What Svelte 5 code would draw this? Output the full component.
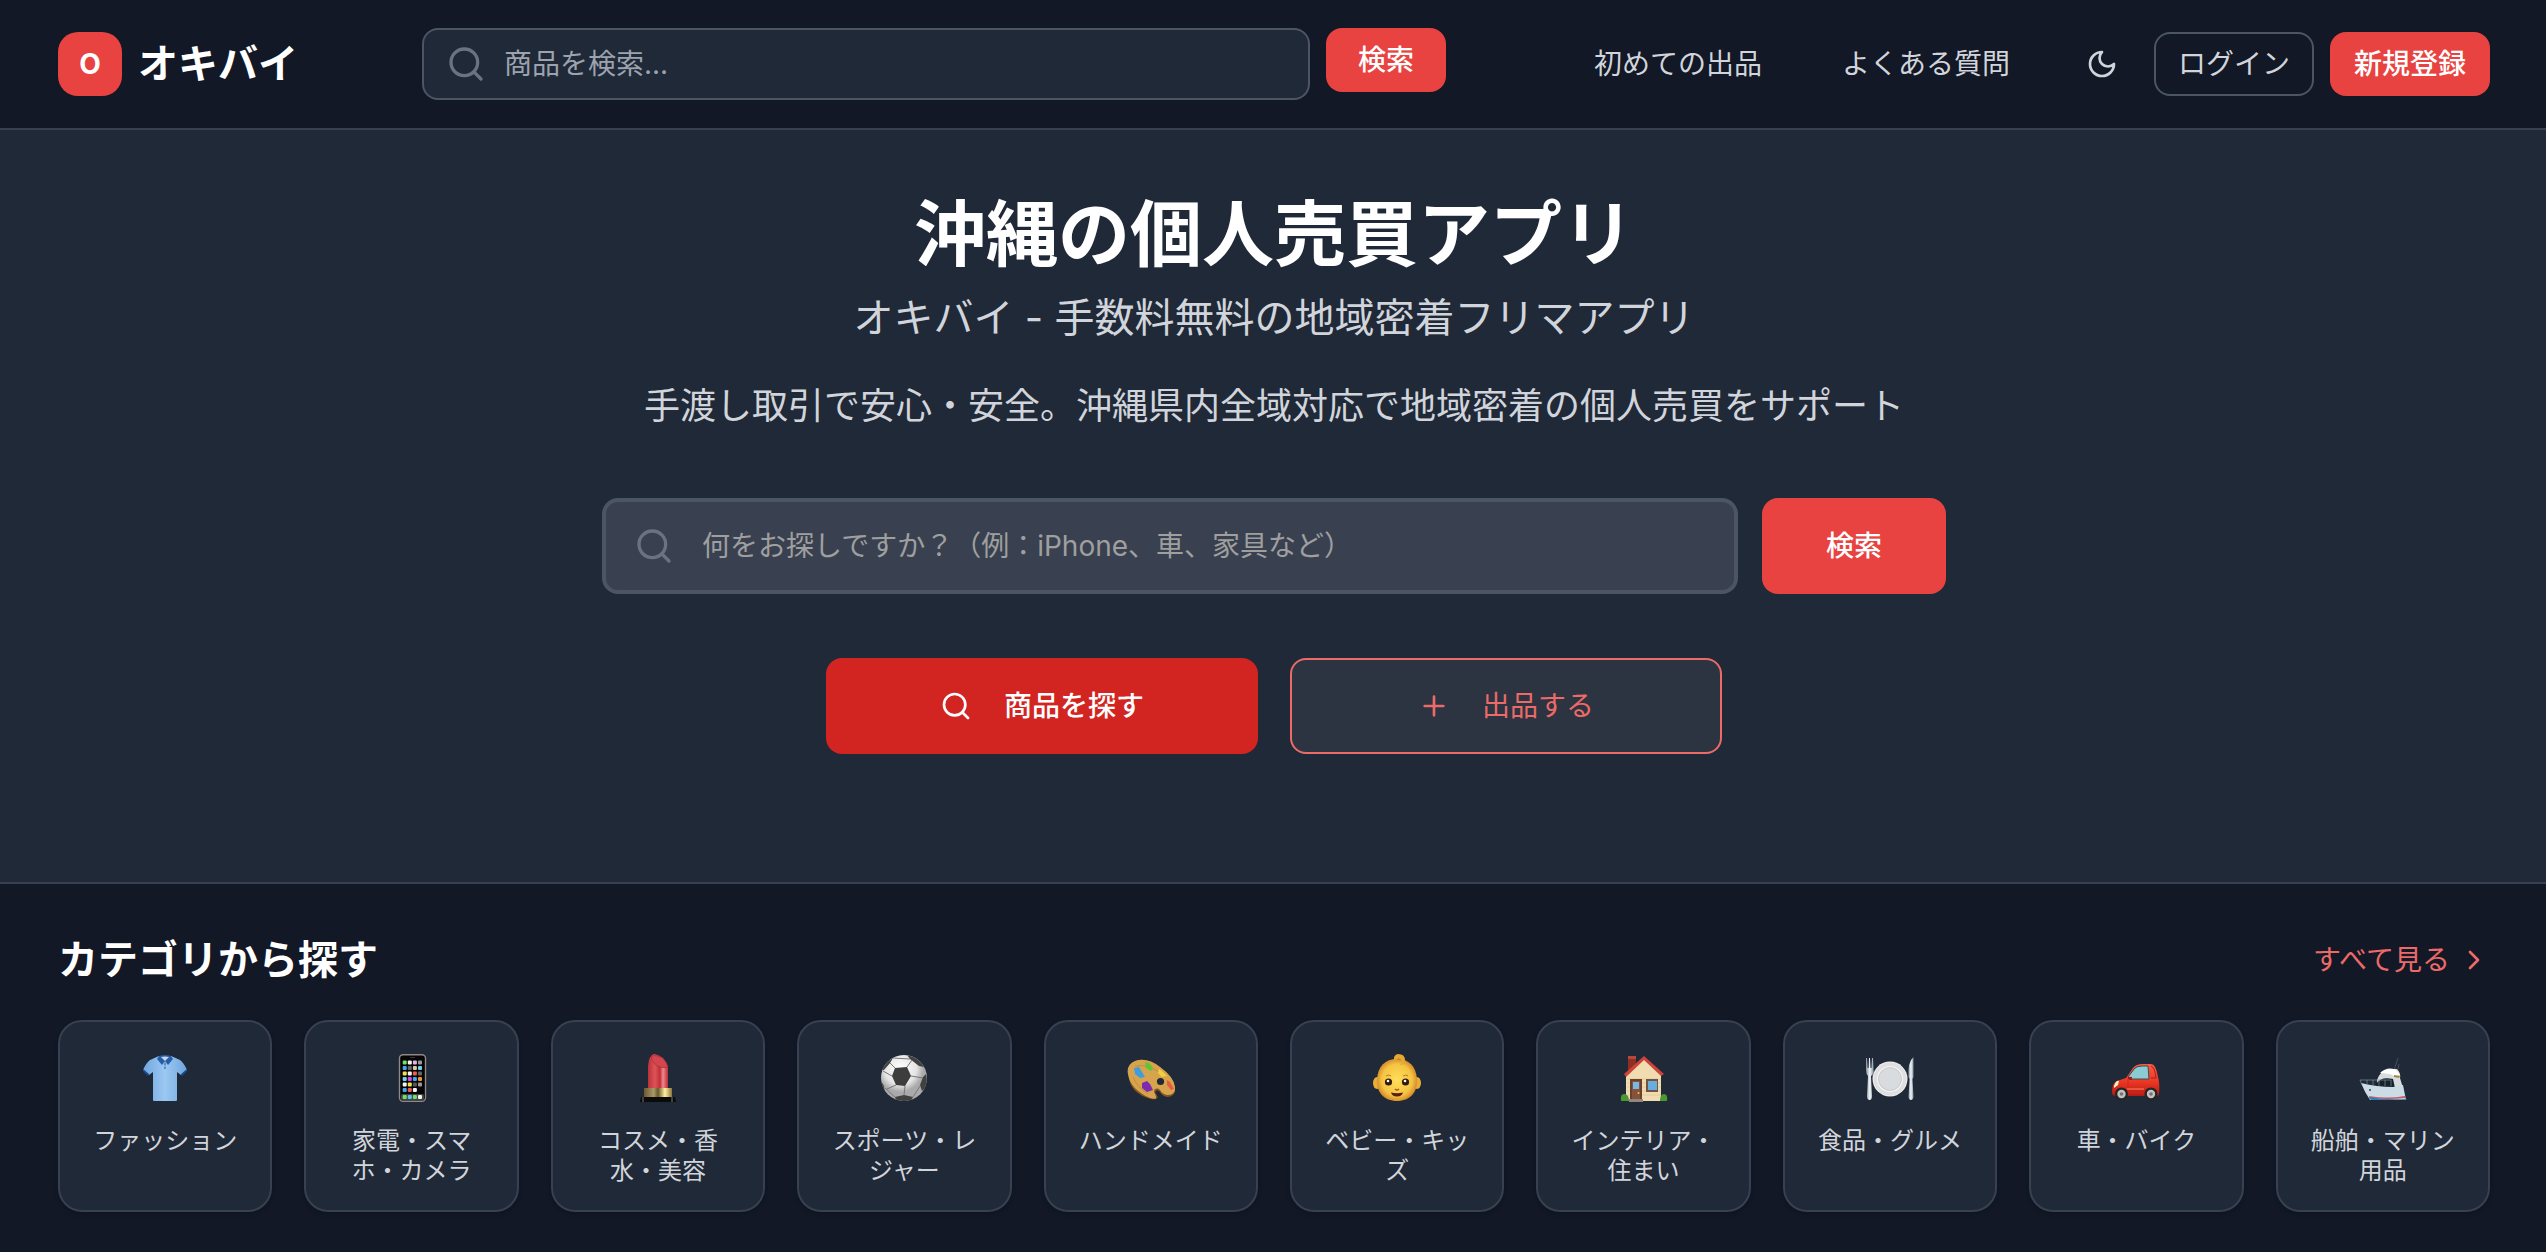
<script lang="ts">
	type Category = { name: string; icon: string };

	let headerQuery = $state('');
	let heroQuery = $state('');

	const categories: Category[] = [
		{ name: 'ファッション', icon: 'shirt' },
		{ name: '家電・スマホ・カメラ', icon: 'phone' },
		{ name: 'コスメ・香水・美容', icon: 'lipstick' },
		{ name: 'スポーツ・レジャー', icon: 'ball' },
		{ name: 'ハンドメイド', icon: 'palette' },
		{ name: 'ベビー・キッズ', icon: 'baby' },
		{ name: 'インテリア・住まい', icon: 'house' },
		{ name: '食品・グルメ', icon: 'plate' },
		{ name: '車・バイク', icon: 'car' },
		{ name: '船舶・マリン用品', icon: 'boat' }
	];

	// home screen of the phone icon, one row per line
	const apps = [
		['#6fe06a', '#f4f4f4', '#e3b1ea', '#9a9a9a'],
		['#46a6f5', '#666', '#d8cba8', '#6fd3f2'],
		['#f4e04e', '#f4f4f4', '#ee5a4c', '#666'],
		['#6fd3f2', '#d94be0', '#46a6f5', '#f59331'],
		['#f4f4f4', '#f4e04e', '#555', '#999'],
		['#46a6f5', '#ee5a4c', '#f4f4f4']
	];
	const dock = ['#6fe06a', '#5ac4f5', '#6fe06a', '#f4f4f4'];

	function submit(e: SubmitEvent) {
		e.preventDefault();
	}
</script>

{#snippet searchIcon()}
	<svg class="line-icon" viewBox="0 0 24 24" aria-hidden="true">
		<circle cx="11" cy="11" r="8" />
		<path d="m21 21-4.3-4.3" />
	</svg>
{/snippet}

{#snippet categoryIcon(icon: string)}
	<svg class="emoji" viewBox="0 0 48 48" aria-hidden="true">
		{#if icon === 'shirt'}
			<defs>
				<linearGradient id="shirt-fill" x1="0" x2="1">
					<stop offset="0" stop-color="#6fa6de" />
					<stop offset=".5" stop-color="#9cc8f2" />
					<stop offset="1" stop-color="#6fa6de" />
				</linearGradient>
			</defs>
			<path d="M18 2 9 6Q5 9 2 16l6 5 4-3v28q0 1 1 1h22q1 0 1-1V18l4 3 6-5Q43 9 39 6L30 2Z" fill="url(#shirt-fill)" />
			<path d="m2 15 6 5-1 2-5-5ZM46 15l-6 5 1 2 5-5Z" fill="#174a93" />
			<path d="M18 2q6-2 12 0l2 3-5 6-3-4-3 4-5-6Z" fill="#275da8" />
			<path d="M20 3q4-1 8 0l-4 4Z" fill="#c6d9ed" />
			<path d="M24 8v7" stroke="#5d91cb" />
			<circle cx="24" cy="10" r=".7" fill="#285894" />
			<circle cx="24" cy="14" r=".7" fill="#285894" />
		{:else if icon === 'phone'}
			<rect x="11.5" y=".7" width="26" height="46.6" rx="3.5" fill="#050505" stroke="#8c8988" stroke-width="1.4" />
			<path d="M22 3.5h5" stroke="#333" />
			{#each apps as row, y}
				{#each row as color, x}
					<rect x={14.7 + x * 5.1} y={6.4 + y * 5.5} width="4" height="4" rx="1" fill={color} />
				{/each}
			{/each}
			<rect x="13" y="40" width="23" height="6" rx="1.5" fill="#444" />
			{#each dock as color, x}
				<rect x={14.7 + x * 5.1} y="41" width="4" height="4" rx="1" fill={color} />
			{/each}
		{:else if icon === 'lipstick'}
			<defs>
				<linearGradient id="gold" x1="0" x2="1">
					<stop offset="0" stop-color="#6c5930" />
					<stop offset=".35" stop-color="#a99a66" />
					<stop offset=".5" stop-color="#69562a" />
					<stop offset=".75" stop-color="#fff2a2" />
					<stop offset="1" stop-color="#8d733b" />
				</linearGradient>
				<linearGradient id="lip" x1="0" x2="1">
					<stop offset="0" stop-color="#b93239" />
					<stop offset=".35" stop-color="#df5358" />
					<stop offset=".6" stop-color="#bd3038" />
					<stop offset=".75" stop-color="#f2888c" />
					<stop offset="1" stop-color="#b92d36" />
				</linearGradient>
			</defs>
			<path d="M14 35V12Q15 1 20 0q10 1 14 13v22Z" fill="url(#lip)" />
			<path d="M17 3q3-3 7-1 7 2 10 11-8 2-13-3-4-4-4-7Z" fill="#d2474e" stroke="#aa2931" stroke-width=".7" />
			<rect x="10" y="34" width="28" height="10" fill="url(#gold)" />
			<path d="M7 43h34l1 5H6Z" fill="#0b0b0b" />
			<path d="M9 43v5M38 43v5" stroke="#777" />
		{:else if icon === 'ball'}
			<defs>
				<radialGradient id="ball-fill" cx=".42" cy=".3">
					<stop offset="0" stop-color="#fff" />
					<stop offset=".7" stop-color="#e4e4e4" />
					<stop offset="1" stop-color="#aaa" />
				</radialGradient>
				<clipPath id="ball-clip"><circle cx="24" cy="24" r="23" /></clipPath>
			</defs>
			<circle cx="24" cy="24" r="23" fill="url(#ball-fill)" />
			<g clip-path="url(#ball-clip)">
				<path d="m15 14 12-1 4 9-6 10-9-1-4-9Z" fill="#3d3d3d" />
				<path d="M27 1q12 2 17 12l-5-1-9-7ZM1 16Q5 7 13 4l-3 5-6 7ZM46 20q3 12-4 17l-2-6 3-8ZM15 43l9-2 9 2-3 6H17ZM1 27l3 5 1 9-6-8Z" fill="#414141" />
				<path d="m15 14-5-5M27 13l5-7M31 22l12 2M25 32l-1 9M16 31l-9 4M12 22l-9-5M40 32l-7 11M15 43 5 34M13 4l17 1" fill="none" stroke="#777" />
			</g>
		{:else if icon === 'palette'}
			<g transform="translate(0 1)">
				<path d="M2 22Q-1 11 8 6q12-4 25 6 14 10 15 22 0 8-8 8-5-1-7-5c-3-3-6-1-4 2 4 5 0 6-5 5C11 41 2 32 2 22Z" fill="#875421" />
				<path d="M1 19Q-1 10 8 6q12-4 25 6 14 10 15 20 1 8-8 8-5-1-7-5c-3-3-8-1-5 4 3 6-1 5-5 4C11 38 2 29 1 19Z" fill="#d7a44e" />
				<path d="M8 11q15-3 30 11M6 22q4 10 15 17" fill="none" stroke="#bb8639" stroke-width=".8" />
				<circle cx="33.5" cy="26.5" r="3.6" fill="#212937" />
				<path d="m7 13 5-1 3 5 3 5-5 1-5-4Z" fill="#3e9dde" />
				<path d="m18 7 4 1 4 5-2 3-5-3Z" fill="#5bc736" />
				<path d="m32 14 3 2 5 5-5 1-4-4Z" fill="#f1cf43" />
				<path d="m15 28 5-2 3 3 3 6-6 2-5-4Z" fill="#7c2aaf" />
				<path d="m40 25 3 2 4 7-3 1-4-5Z" fill="#e85b45" />
			</g>
		{:else if icon === 'baby'}
			<defs>
				<radialGradient id="skin">
					<stop offset="0" stop-color="#ffdf59" />
					<stop offset=".75" stop-color="#f5c442" />
					<stop offset="1" stop-color="#d8902d" />
				</radialGradient>
			</defs>
			<ellipse cx="4" cy="29" rx="4" ry="6" fill="#e9ac37" />
			<ellipse cx="44" cy="29" rx="4" ry="6" fill="#e9ac37" />
			<path d="M4 25C5 12 12 5 24 5s19 7 20 20c1 13-7 22-20 22S3 38 4 25Z" fill="url(#skin)" />
			<path d="M21 7q-1-6 4-7 7 0 7 6 0 5-5 5 4-4 0-6-3-1-6 2Z" fill="#e6aa31" />
			<path d="M13 22q2-2 5 0M30 22q3-2 5 0" fill="none" stroke="#b17929" />
			<ellipse cx="15.5" cy="28" rx="3.6" ry="3.6" fill="#321b0c" />
			<ellipse cx="32.5" cy="28" rx="3.6" ry="3.6" fill="#321b0c" />
			<circle cx="15" cy="27" r="1.3" fill="#fff" />
			<circle cx="32" cy="27" r="1.3" fill="#fff" />
			<path d="M22 35q2 2 4 0" fill="none" stroke="#a65518" stroke-width="1.2" />
			<path d="M18 38.5q6 1.5 12 0-1 4-6 4t-6-4Z" fill="#56220f" />
		{:else if icon === 'house'}
			<path d="M8 2h8v13l-8 7Z" fill="#8c2f24" />
			<path d="M8 2h8v3H8Z" fill="#b64839" />
			<path d="M6 20 24 4l17 17v26H6Z" fill="#f1dbb0" />
			<path d="M7 25h34M7 29h34M7 33h34M7 37h34M7 41h34" stroke="#dfc594" stroke-width=".7" />
			<path d="M4 20 24 2l20 18-3 2L24 6 6 23Z" fill="#cc4339" />
			<path d="M10 25h12v22H10Z" fill="#69412e" />
			<path d="M12 27h8v18h-8Z" fill="#87523b" />
			<path d="M13 28h6v7h-6Z" fill="#77b9e2" />
			<circle cx="18.5" cy="39" r="1" fill="#f1c442" />
			<rect x="26" y="25" width="12" height="13" fill="#725443" />
			<rect x="28" y="27" width="9" height="9" fill="#68ade0" />
			<path d="M9 45h14v3H9Z" fill="#91877e" />
			<path d="M1 47q-1-8 4-7 4 1 4 7ZM40 47q0-7 4-7t3 7Z" fill="#4b9832" />
		{:else if icon === 'plate'}
			<defs>
				<linearGradient id="steel" x1="0" x2="1">
					<stop offset="0" stop-color="#83919e" />
					<stop offset=".5" stop-color="#f4f8fb" />
					<stop offset="1" stop-color="#81909e" />
				</linearGradient>
			</defs>
			<path d="M0 4h1l.6 10h1L3 4h1l.5 10h1L6 4h1l.7 14Q7 21 5 22l1 20q0 4-2.5 4T1 42l1-20Q0 20 0 16Z" fill="url(#steel)" />
			<circle cx="24" cy="25" r="17.5" fill="#efefef" />
			<circle cx="24" cy="25" r="16.5" fill="#dfdfdf" />
			<circle cx="24" cy="25" r="13" fill="#f5f5f5" />
			<circle cx="24" cy="25" r="11.5" fill="#d9dcdf" stroke="#b9bdc1" stroke-width=".7" />
			<path d="M47.5 3v20l-1 2 1 18q-.5 3-2.5 3t-2.5-3l1-18-1-2q-1-15 5-20Z" fill="url(#steel)" />
		{:else if icon === 'car'}
			<defs>
				<linearGradient id="car-fill" x2="0" y2="1">
					<stop offset="0" stop-color="#fa5c42" />
					<stop offset=".55" stop-color="#ec3825" />
					<stop offset="1" stop-color="#b51912" />
				</linearGradient>
			</defs>
			<path d="M0 38q0-9 5-11l9-3 7-10q3-4 10-4h8q5 0 7 13 2 6 1 17 0 2-3 2H4q-4 0-4-4Z" fill="url(#car-fill)" />
			<path d="m16 23 7-9q2-2 8-2h5l1 13H18Z" fill="#8bcbd2" stroke="#374d53" stroke-width="1" />
			<path d="M39 12q4 1 5 12h-5" fill="none" stroke="#ac211b" stroke-width="1" />
			<path d="M16 25v14h17" fill="none" stroke="#c72a1d" />
			<path d="M2 32q2-6 5-5l-1 4-4 3Z" fill="#fff2bf" />
			<path d="M20 23q-4-1-4 1t4 2Z" fill="#a91915" />
			<path d="M15 35h17" stroke="#ff725f" stroke-width="1.2" />
			<circle cx="9.5" cy="40" r="6.6" fill="#252525" />
			<circle cx="9.5" cy="40" r="4.2" fill="#c1c1c1" />
			<circle cx="9.5" cy="40" r="1.8" fill="#737373" />
			<circle cx="39" cy="40" r="6.6" fill="#252525" />
			<circle cx="39" cy="40" r="4.2" fill="#c1c1c1" />
			<circle cx="39" cy="40" r="1.8" fill="#737373" />
		{:else if icon === 'boat'}
			<path d="m35 16 4-12M39 15l1-5" stroke="#4d5963" stroke-width=".8" />
			<path d="M18 26q3-9 12-11h8q4 4 3 9l3 10H18Z" fill="#d7dcde" />
			<path d="M21 19q6-6 14-4 5 3 6 6l-6 1-4-2Z" fill="#fff" />
			<path d="m35 21 6 1-1 2-5-1Z" fill="#a68548" />
			<path d="M17 30q5-8 17-5l2 9H18Z" fill="#15232c" />
			<path d="M2 29q16 4 32 4l10-2 3 15H11Q6 39 2 29Z" fill="#cbdce7" />
			<path d="M10 42q18 3 36 0v2q-17 2-35 0Z" fill="#d35459" />
			<path d="M9 43q18 3 38 2l1 1H12Z" fill="#2e80b8" />
			<path d="M1 26h31M1 26l2 5M8 26v5M14 26v6M20 26v6M26 26v6M32 26v6" fill="none" stroke="#82919b" stroke-width=".7" />
			<circle cx="11" cy="36" r="1" fill="#304854" />
		{/if}
	</svg>
{/snippet}

<div class="page">
	<header>
		<a class="logo" href="/">
			<span class="logo-mark">O</span>
			<span class="logo-name">オキバイ</span>
		</a>

		<form class="header-search" role="search" onsubmit={submit}>
			<div class="field">
				{@render searchIcon()}
				<input type="text" placeholder="商品を検索..." aria-label="商品を検索" bind:value={headerQuery} />
			</div>
			<button class="btn red" type="submit">検索</button>
		</form>

		<div class="actions">
			<nav>
				<a href="/guide">初めての出品</a>
				<a href="/faq">よくある質問</a>
			</nav>
			<div class="account">
				<button class="theme" type="button" aria-label="ダークモード切り替え">
					<svg class="line-icon" viewBox="0 0 24 24" aria-hidden="true">
						<path d="M12 3a6 6 0 0 0 9 9 9 9 0 1 1-9-9Z" />
					</svg>
				</button>
				<a class="btn outline" href="/login">ログイン</a>
				<a class="btn red" href="/register">新規登録</a>
			</div>
		</div>
	</header>

	<main>
		<section class="hero">
			<h1>沖縄の個人売買アプリ</h1>
			<p class="subtitle">オキバイ - 手数料無料の地域密着フリマアプリ</p>
			<p class="lead">手渡し取引で安心・安全。沖縄県内全域対応で地域密着の個人売買をサポート</p>

			<form class="hero-search" role="search" onsubmit={submit}>
				<div class="field">
					{@render searchIcon()}
					<input
						type="text"
						placeholder="何をお探しですか？（例：iPhone、車、家具など）"
						aria-label="何をお探しですか"
						bind:value={heroQuery}
					/>
				</div>
				<button class="btn red" type="submit">検索</button>
			</form>

			<div class="cta">
				<a class="browse" href="/products">
					{@render searchIcon()}
					商品を探す
				</a>
				<a class="sell" href="/sell">
					<svg class="line-icon" viewBox="0 0 24 24" aria-hidden="true"><path d="M5 12h14M12 5v14" /></svg>
					出品する
				</a>
			</div>
		</section>

		<section class="categories">
			<div class="section-head">
				<h2>カテゴリから探す</h2>
				<a href="/categories">
					すべて見る
					<svg class="line-icon" viewBox="0 0 24 24" aria-hidden="true"><path d="m9 18 6-6-6-6" /></svg>
				</a>
			</div>
			<div class="grid">
				{#each categories as category (category.icon)}
					<a class="card" href="/categories/{category.icon}">
						{@render categoryIcon(category.icon)}
						<span>{category.name}</span>
					</a>
				{/each}
			</div>
		</section>
	</main>
</div>

<style>
	:global(body) {
		margin: 0;
		background: #121826;
	}

	.page {
		min-height: 100vh;
		background: #121826;
		color: #d1d5db;
		font-family: Inter, 'Noto Sans CJK JP', sans-serif;
		font-size: 28px;
		line-height: 40px;
	}

	.page *,
	.page {
		box-sizing: border-box;
	}

	a {
		color: inherit;
		text-decoration: none;
	}

	button,
	input {
		font: inherit;
	}

	button {
		border: none;
		cursor: pointer;
	}

	h1,
	h2,
	p {
		margin: 0;
	}

	.line-icon {
		width: 32px;
		height: 32px;
		flex: none;
		fill: none;
		stroke: currentColor;
		stroke-width: 2;
		stroke-linecap: round;
		stroke-linejoin: round;
	}

	header {
		display: flex;
		align-items: center;
		justify-content: space-between;
		gap: 32px;
		padding: 28px 56px 28px 58px;
		border-bottom: 2px solid #374151;
	}

	.logo {
		display: flex;
		align-items: center;
		gap: 16px;
		color: #fff;
		font-weight: 700;
		white-space: nowrap;
	}

	.logo-mark {
		display: flex;
		align-items: center;
		justify-content: center;
		width: 64px;
		height: 64px;
		border-radius: 20px;
		background: #e84341;
	}

	.logo-name {
		font-size: 40px;
	}

	.header-search {
		display: flex;
		align-items: flex-start;
		flex: 0 1 1024px;
		gap: 16px;
	}

	.field {
		position: relative;
		flex: 1;
		min-width: 0;
	}

	.field .line-icon {
		position: absolute;
		top: 0;
		bottom: 0;
		left: 24px;
		width: 40px;
		height: 40px;
		margin: auto 0;
		color: #6b7280;
	}

	.field input {
		display: block;
		width: 100%;
		height: 72px;
		padding: 0 32px 0 80px;
		border: 2px solid #4b5563;
		border-radius: 16px;
		outline: none;
		background: #202937;
		color: #fff;
	}

	.field input::placeholder {
		color: #9ca3af;
		opacity: 1;
	}

	.btn {
		display: flex;
		align-items: center;
		justify-content: center;
		height: 64px;
		padding: 0 24px;
		border-radius: 16px;
		white-space: nowrap;
	}

	.red {
		background: #e84341;
		color: #fff;
		font-weight: 500;
	}

	.outline {
		padding: 0 22px;
		border: 2px solid #4b5563;
	}

	.header-search .btn {
		padding: 0 32px;
	}

	.actions {
		display: flex;
		align-items: center;
		gap: 32px;
		white-space: nowrap;
	}

	nav {
		display: flex;
		gap: 32px;
	}

	nav a {
		padding: 0 24px;
	}

	.account {
		display: flex;
		align-items: center;
		gap: 16px;
	}

	.theme {
		display: flex;
		align-items: center;
		padding: 20px;
		background: none;
		color: inherit;
	}

	.hero {
		display: flex;
		flex-direction: column;
		align-items: center;
		padding: 60px 56px 128px 58px;
		border-bottom: 2px solid #374151;
		background: #202937;
		text-align: center;
	}

	h1 {
		color: #fff;
		font-size: 72px;
		font-weight: 700;
		line-height: 88px;
	}

	.subtitle {
		margin-top: 12px;
		font-size: 40px;
		line-height: 56px;
	}

	.lead {
		margin-top: 32px;
		font-size: 36px;
		line-height: 56px;
	}

	.hero-search {
		display: flex;
		gap: 24px;
		width: 100%;
		max-width: 1344px;
		margin-top: 64px;
	}

	.hero-search .line-icon {
		left: 32px;
	}

	.hero-search input {
		height: 96px;
		padding-left: 96px;
		border-width: 4px;
		background: #394150;
	}

	.hero-search input::placeholder {
		color: #9f9f9f;
	}

	.hero-search .btn {
		height: 96px;
		padding: 0 64px;
	}

	.cta {
		display: flex;
		gap: 32px;
		margin-top: 64px;
	}

	.cta a {
		display: flex;
		align-items: center;
		justify-content: center;
		gap: 32px;
		width: 432px;
		height: 96px;
		border-radius: 16px;
	}

	.browse {
		background: #d22421;
		color: #fff;
		font-weight: 500;
	}

	.sell {
		border: 2px solid #ec6a68;
		background: #2b3440;
		color: #ec6a68;
	}

	.categories {
		padding: 48px 56px 40px 58px;
	}

	.section-head {
		display: flex;
		align-items: center;
		justify-content: space-between;
	}

	h2 {
		color: #fff;
		font-size: 40px;
		font-weight: 700;
		line-height: 56px;
	}

	.section-head a {
		display: flex;
		align-items: center;
		gap: 8px;
		color: #ec6a68;
	}

	.grid {
		display: grid;
		grid-template-columns: repeat(10, minmax(0, 1fr));
		gap: 32px;
		margin-top: 32px;
	}

	.card {
		display: flex;
		flex-direction: column;
		align-items: center;
		gap: 24px;
		padding: 32px 24px 24px;
		border: 2px solid #374151;
		border-radius: 24px;
		background: #202937;
		box-shadow: 0 2px 4px rgb(0 0 0 / 20%);
		font-size: 24px;
		line-height: 30px;
		text-align: center;
	}

	.emoji {
		width: 48px;
		height: 48px;
		flex: none;
	}
</style>
